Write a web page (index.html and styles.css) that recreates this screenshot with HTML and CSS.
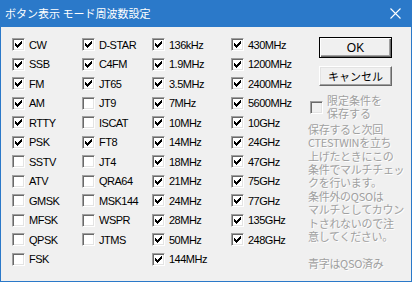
FILE: index.html
```html
<!DOCTYPE html>
<html lang="ja">
<head>
    <meta charset="UTF-8">
    <title>ボタン表示 モード周波数設定</title>
    <link rel="stylesheet" href="styles.css">
</head>
<body>
    <svg class="defs" width="0" height="0">
        <symbol id="chk" viewBox="0 0 7 7">
            <path d="M0 2h1v3H0zM1 3h1v3H1zM2 4h1v3H2zM3 3h1v3H3zM4 2h1v3H4zM5 1h1v3H5zM6 0h1v3H6z" fill="#000"/>
        </symbol>
    </svg>

    <div class="window">
        <div class="titlebar">
            <span class="title">ボタン表示 モード周波数設定</span>
            <span class="close">
                <svg width="11" height="11" viewBox="0 0 11 11"><path d="M0.5 0.5L10.5 10.5M10.5 0.5L0.5 10.5" stroke="#fff" stroke-width="1.1"/></svg>
            </span>
        </div>

        <div class="content">
            <div class="checks">
                <div class="col col1">
                    <div class="item"><span class="box"><svg><use href="#chk"/></svg></span>CW</div>
                    <div class="item"><span class="box"><svg><use href="#chk"/></svg></span>SSB</div>
                    <div class="item"><span class="box"><svg><use href="#chk"/></svg></span>FM</div>
                    <div class="item"><span class="box"><svg><use href="#chk"/></svg></span>AM</div>
                    <div class="item"><span class="box"><svg><use href="#chk"/></svg></span>RTTY</div>
                    <div class="item"><span class="box"><svg><use href="#chk"/></svg></span>PSK</div>
                    <div class="item"><span class="box"></span>SSTV</div>
                    <div class="item"><span class="box"></span>ATV</div>
                    <div class="item"><span class="box"></span>GMSK</div>
                    <div class="item"><span class="box"></span>MFSK</div>
                    <div class="item"><span class="box"></span>QPSK</div>
                    <div class="item"><span class="box"></span>FSK</div>
                </div>
                <div class="col col2">
                    <div class="item"><span class="box"><svg><use href="#chk"/></svg></span>D-STAR</div>
                    <div class="item"><span class="box"><svg><use href="#chk"/></svg></span>C4FM</div>
                    <div class="item"><span class="box"><svg><use href="#chk"/></svg></span>JT65</div>
                    <div class="item"><span class="box"></span>JT9</div>
                    <div class="item"><span class="box"></span>ISCAT</div>
                    <div class="item"><span class="box"><svg><use href="#chk"/></svg></span>FT8</div>
                    <div class="item"><span class="box"></span>JT4</div>
                    <div class="item"><span class="box"></span>QRA64</div>
                    <div class="item"><span class="box"></span>MSK144</div>
                    <div class="item"><span class="box"></span>WSPR</div>
                    <div class="item"><span class="box"></span>JTMS</div>
                </div>
                <div class="col col3">
                    <div class="item"><span class="box"><svg><use href="#chk"/></svg></span>136kHz</div>
                    <div class="item"><span class="box"><svg><use href="#chk"/></svg></span>1.9MHz</div>
                    <div class="item"><span class="box"><svg><use href="#chk"/></svg></span>3.5MHz</div>
                    <div class="item"><span class="box"><svg><use href="#chk"/></svg></span>7MHz</div>
                    <div class="item"><span class="box"><svg><use href="#chk"/></svg></span>10MHz</div>
                    <div class="item"><span class="box"><svg><use href="#chk"/></svg></span>14MHz</div>
                    <div class="item"><span class="box"><svg><use href="#chk"/></svg></span>18MHz</div>
                    <div class="item"><span class="box"><svg><use href="#chk"/></svg></span>21MHz</div>
                    <div class="item"><span class="box"><svg><use href="#chk"/></svg></span>24MHz</div>
                    <div class="item"><span class="box"><svg><use href="#chk"/></svg></span>28MHz</div>
                    <div class="item"><span class="box"><svg><use href="#chk"/></svg></span>50MHz</div>
                    <div class="item"><span class="box"><svg><use href="#chk"/></svg></span>144MHz</div>
                </div>
                <div class="col col4">
                    <div class="item"><span class="box"><svg><use href="#chk"/></svg></span>430MHz</div>
                    <div class="item"><span class="box"><svg><use href="#chk"/></svg></span>1200MHz</div>
                    <div class="item"><span class="box"><svg><use href="#chk"/></svg></span>2400MHz</div>
                    <div class="item"><span class="box"><svg><use href="#chk"/></svg></span>5600MHz</div>
                    <div class="item"><span class="box"><svg><use href="#chk"/></svg></span>10GHz</div>
                    <div class="item"><span class="box"><svg><use href="#chk"/></svg></span>24GHz</div>
                    <div class="item"><span class="box"><svg><use href="#chk"/></svg></span>47GHz</div>
                    <div class="item"><span class="box"><svg><use href="#chk"/></svg></span>75GHz</div>
                    <div class="item"><span class="box"><svg><use href="#chk"/></svg></span>77GHz</div>
                    <div class="item"><span class="box"><svg><use href="#chk"/></svg></span>135GHz</div>
                    <div class="item"><span class="box"><svg><use href="#chk"/></svg></span>248GHz</div>
                </div>
            </div>

            <div class="side">
                <div class="btn btn-default">OK</div>
                <div class="btn btn-cancel">キャンセル</div>

                <div class="limit">
                    <span class="box box-disabled"></span>
                    <span class="limit-label">限定条件を<br>保存する</span>
                </div>

                <p class="note">保存すると次回<br>CTESTWINを立ち<br>上げたときにこの<br>条件でマルチチェッ<br>クを行います。<br>条件外のQSOは<br>マルチとしてカウン<br>トされないので注<br>意してください。<br><br>青字はQSO済み</p>
            </div>
        </div>
    </div>
</body>
</html>
```

FILE: styles.css
```css
body {
    margin: 0;
    padding: 0;
    background-color: #f0f0f0;
    font-family: "Liberation Sans", "Noto Sans CJK JP", sans-serif;
    font-size: 11px;
    color: #000;
}
.defs {
    position: absolute;
}
.window {
    width: 412px;
    height: 282px;
    box-sizing: border-box;
    border: 1px solid #2b79c9;
    border-top: 0;
    background-color: #f0f0f0;
    overflow: hidden;
}
.titlebar {
    height: 27px;
    background-color: #2b79c9;
    display: flex;
    align-items: center;
    justify-content: space-between;
    color: #fff;
}
.title {
    font-family: "Noto Sans CJK JP", sans-serif;
    font-size: 11px;
    padding-left: 4px;
    margin-top: -1px;
}
.close {
    display: flex;
    padding-right: 10px;
    margin-top: -1px;
}
.content {
    display: flex;
}
.checks {
    display: flex;
    padding-left: 11px;
    padding-top: 8px;
}
.col {
    display: flex;
    flex-direction: column;
}
.col1, .col2 {
    width: 70px;
}
.col3 {
    width: 79px;
}
.col4 {
    width: 77px;
}
.item {
    height: 19.5px;
    display: flex;
    align-items: center;
    white-space: nowrap;
    letter-spacing: -0.5px;
}
.box {
    width: 13px;
    height: 13px;
    box-sizing: border-box;
    flex: none;
    margin-right: 4px;
    background-color: #fff;
    border: 1px solid;
    border-color: #a0a0a0 #fff #fff #a0a0a0;
    box-shadow: inset 1px 1px 0 #696969, inset -1px -1px 0 #e3e3e3;
    display: flex;
    align-items: center;
    justify-content: center;
}
.box svg {
    width: 7px;
    height: 7px;
}
.box-disabled {
    background-color: #f0f0f0;
}
.side {
    width: 103px;
    font-family: "Noto Sans CJK JP", sans-serif;
}
.btn {
    width: 73px;
    height: 21px;
    box-sizing: border-box;
    margin-left: 11px;
    display: flex;
    align-items: center;
    justify-content: center;
    background-color: #f0f0f0;
    font-size: 11px;
}
.btn-default {
    margin-top: 10px;
    border: 1px solid #000;
    box-shadow: inset 1px 1px 0 #fff, inset -1px -1px 0 #696969, inset -2px -2px 0 #a0a0a0;
    font-family: "Liberation Sans", sans-serif;
    font-size: 12px;
}
.btn-cancel {
    margin-top: 8px;
    height: 20px;
    border: 1px solid;
    border-color: #fff #696969 #696969 #fff;
    box-shadow: inset -1px -1px 0 #a0a0a0, inset 1px 1px 0 #e3e3e3;
}
.limit {
    display: flex;
    align-items: flex-start;
    margin-top: 8px;
    padding-left: 2px;
}
.limit .box {
    margin-top: 7px;
}
.limit-label, .note {
    color: #a0a0a0;
    text-shadow: 1px 1px 0 #fff;
    font-size: 11px;
    line-height: 13.4px;
    white-space: nowrap;
}
.note {
    margin: 2px 0 0;
    letter-spacing: -0.3px;
}
```
